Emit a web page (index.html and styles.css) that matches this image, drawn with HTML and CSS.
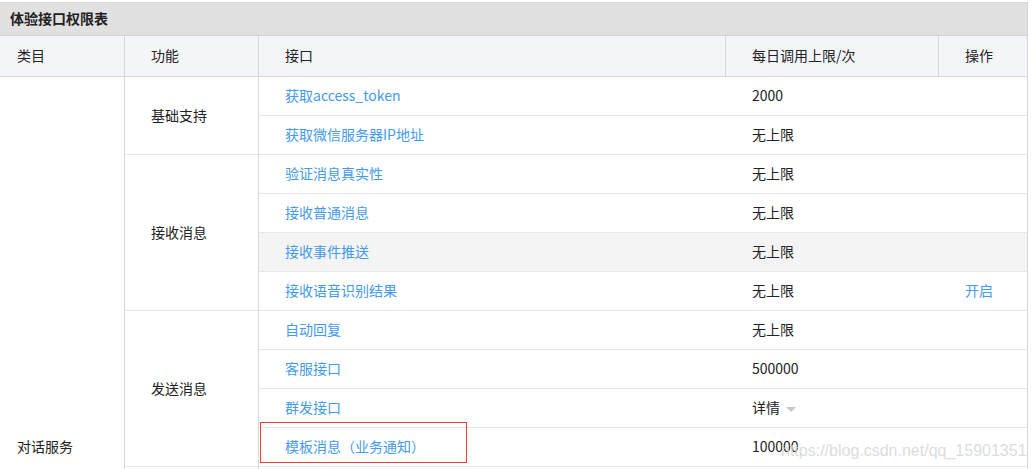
FILE: index.html
```html
<!DOCTYPE html>
<html lang="zh-CN">
<head>
<meta charset="utf-8">
<title>体验接口权限表</title>
<link rel="stylesheet" href="styles.css">
</head>
<body>
<div class="panel">
  <div class="panel-title">体验接口权限表</div>
  <table class="perm">
    <colgroup>
      <col class="w-cat"><col class="w-fn"><col class="w-api"><col class="w-limit"><col class="w-op">
    </colgroup>
    <thead>
      <tr>
        <th class="h-cat">类目</th>
        <th>功能</th>
        <th>接口</th>
        <th>每日调用上限/次</th>
        <th class="h-op">操作</th>
      </tr>
    </thead>
    <tbody>
      <tr>
        <td class="cat" rowspan="19">对话服务</td>
        <td class="fn" rowspan="2">基础支持</td>
        <td><a class="link">获取access_token</a></td>
        <td>2000</td>
        <td class="op"></td>
      </tr>
      <tr>
        <td><a class="link">获取微信服务器IP地址</a></td>
        <td>无上限</td>
        <td class="op"></td>
      </tr>
      <tr>
        <td class="fn" rowspan="4">接收消息</td>
        <td><a class="link">验证消息真实性</a></td>
        <td>无上限</td>
        <td class="op"></td>
      </tr>
      <tr>
        <td><a class="link">接收普通消息</a></td>
        <td>无上限</td>
        <td class="op"></td>
      </tr>
      <tr class="hover">
        <td><a class="link">接收事件推送</a></td>
        <td>无上限</td>
        <td class="op"></td>
      </tr>
      <tr>
        <td><a class="link">接收语音识别结果</a></td>
        <td>无上限</td>
        <td class="op"><a class="link">开启</a></td>
      </tr>
      <tr>
        <td class="fn" rowspan="4">发送消息</td>
        <td><a class="link">自动回复</a></td>
        <td>无上限</td>
        <td class="op"></td>
      </tr>
      <tr>
        <td><a class="link">客服接口</a></td>
        <td>500000</td>
        <td class="op"></td>
      </tr>
      <tr>
        <td><a class="link">群发接口</a></td>
        <td>详情<span class="caret"></span></td>
        <td class="op"></td>
      </tr>
      <tr>
        <td><a class="link">模板消息（业务通知）</a></td>
        <td>100000</td>
        <td class="op"></td>
      </tr>
      <tr>
        <td class="fn" rowspan="6">用户管理</td>
        <td><a class="link">用户分组管理</a></td>
        <td>无上限</td>
        <td class="op"></td>
      </tr>
      <tr>
        <td><a class="link">设置用户备注名</a></td>
        <td>10000</td>
        <td class="op"></td>
      </tr>
      <tr>
        <td><a class="link">获取用户基本信息</a></td>
        <td>500000</td>
        <td class="op"></td>
      </tr>
      <tr>
        <td><a class="link">获取用户列表</a></td>
        <td>500</td>
        <td class="op"></td>
      </tr>
      <tr>
        <td><a class="link">获取用户地理位置</a></td>
        <td>无上限</td>
        <td class="op"><a class="link">开启</a></td>
      </tr>
      <tr>
        <td><a class="link">网页授权获取用户基本信息</a></td>
        <td>无上限</td>
        <td class="op"></td>
      </tr>
      <tr>
        <td class="fn" rowspan="2">推广支持</td>
        <td><a class="link">生成带参数的二维码</a></td>
        <td>100000</td>
        <td class="op"></td>
      </tr>
      <tr>
        <td><a class="link">长链接转短链接接口</a></td>
        <td>1000</td>
        <td class="op"></td>
      </tr>
      <tr>
        <td class="fn">界面丰富</td>
        <td><a class="link">自定义菜单</a></td>
        <td>1000</td>
        <td class="op"></td>
      </tr>
    </tbody>
  </table>
  <div class="annot"></div>
  <div class="watermark">https://blog.csdn.net/qq_15901351</div>
</div>
</body>
</html>
```
FILE: styles.css
```css
html, body {
  margin: 0;
  padding: 0;
  background: #fff;
}

body {
  font-family: "Microsoft YaHei", "Noto Sans CJK SC", sans-serif;
  font-size: 14px;
  color: #222;
}

.panel {
  position: relative;
  width: 1028px;
  margin-top: 2px;
}

.panel-title {
  box-sizing: border-box;
  height: 34px;
  padding-left: 10px;
  line-height: 31px;
  font-weight: bold;
  background: #e1e1e1;
  border-top: 1px solid #d9d9d9;
  border-bottom: 1px solid #d3d3d3;
  border-right: 1px solid #d3d3d3;
}

.perm {
  width: 1028px;
  table-layout: fixed;
  border-collapse: separate;
  border-spacing: 0;
}

.w-cat { width: 125px; }
.w-fn { width: 134px; }
.w-api { width: 467px; }
.w-limit { width: 213px; }
.w-op { width: 89px; }

.perm th,
.perm td {
  box-sizing: border-box;
  padding: 0 0 2px 26px;
  text-align: left;
  vertical-align: middle;
  line-height: 20px;
  white-space: nowrap;
}

.perm th {
  height: 41px;
  font-weight: normal;
  background: #f4f5f9;
  border-right: 1px solid #d6d6d6;
  border-bottom: 1px solid #d6d6d6;
}

.perm th.h-cat {
  padding-left: 17px;
}

.perm td {
  height: 39px;
  border-bottom: 1px solid #e6e6e6;
}

.perm td.cat {
  padding-left: 17px;
  border-right: 1px solid #d9d9d9;
  border-bottom: 1px solid #e6e6e6;
}

.perm td.fn {
  border-right: 1px solid #d9d9d9;
}

.perm td.op {
  border-right: 1px solid #d6d6d6;
}

.perm tr.hover td {
  background: #f4f4f4;
}

.link {
  color: #459ae9;
  text-decoration: none;
  cursor: pointer;
}

.caret {
  display: inline-block;
  width: 0;
  height: 0;
  margin-left: 6px;
  vertical-align: middle;
  border-left: 5px solid transparent;
  border-right: 5px solid transparent;
  border-top: 5px solid #c8c8c8;
}

.annot {
  position: absolute;
  left: 260px;
  top: 420px;
  width: 207px;
  height: 41px;
  box-sizing: border-box;
  border: 1px solid #f23c3c;
}

.watermark {
  position: absolute;
  left: 781px;
  top: 439px;
  font-family: "Liberation Sans", Arial, sans-serif;
  font-size: 16px;
  line-height: 20px;
  color: rgba(215, 215, 215, 0.9);
  white-space: nowrap;
}
```
